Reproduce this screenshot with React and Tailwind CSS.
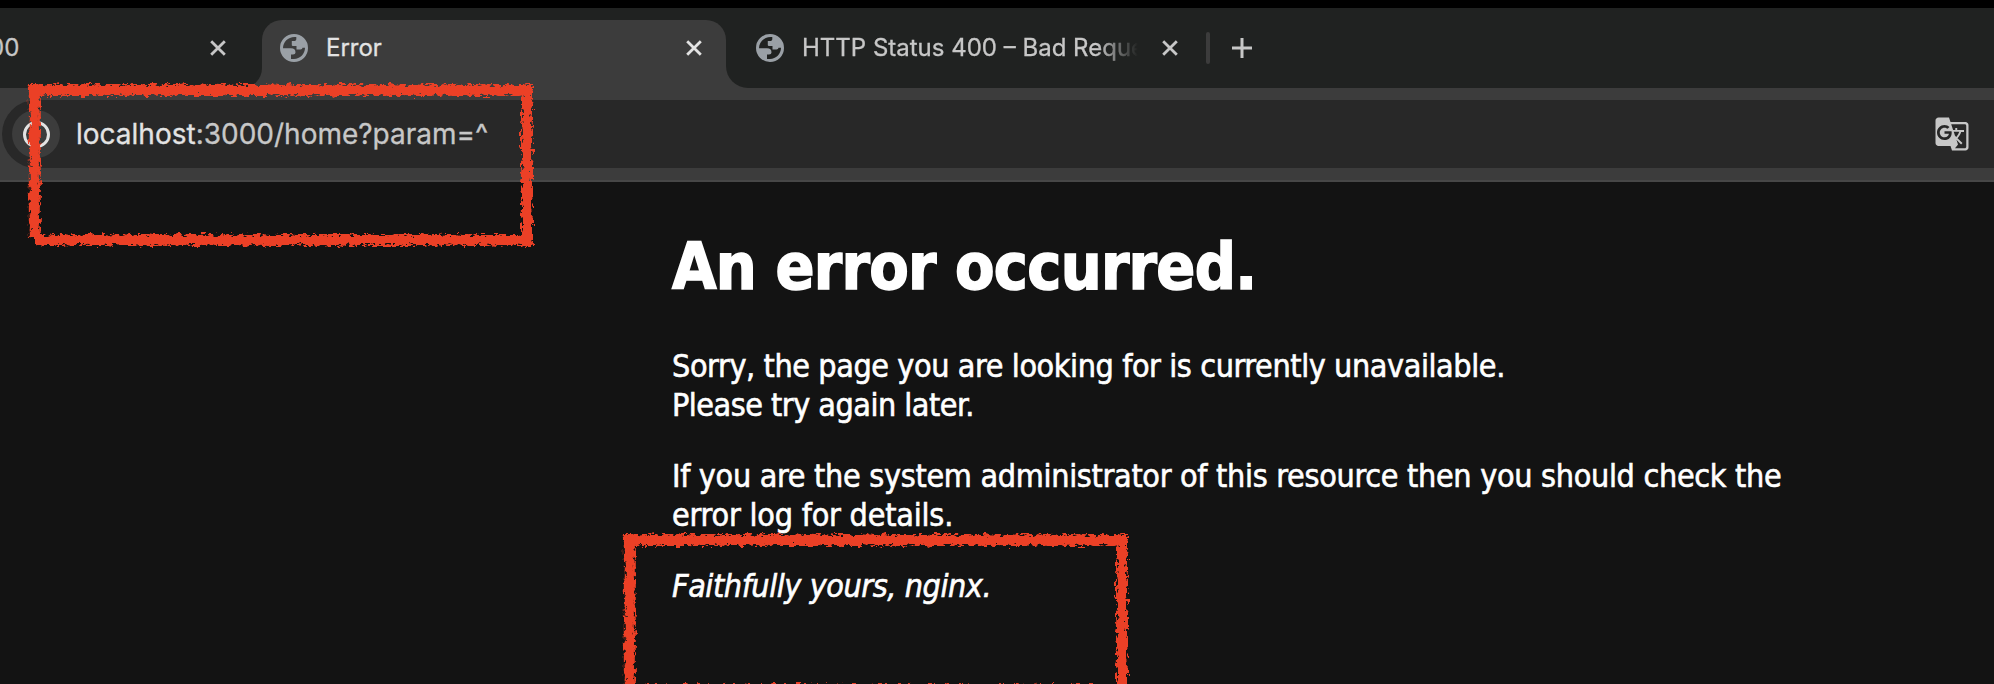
import { MdGTranslate } from "react-icons/md";

function Globe() {
  return (
    <svg viewBox="0 0 28 28" className="size-7 shrink-0">
      <path
        fill="#9aa0a6"
        fillRule="evenodd"
        d="M14 0 A14 14 0 1 1 14 28 A14 14 0 1 1 14 0 Z M3 14.3 C3 8 8 3.2 14.5 3 H16.3 V5 C16.3 6.6 15.4 7 14 7 H11.8 V11.2 Q11.8 12 13 12 H16.5 V15.5 H20.5 Q22.5 15.5 22.5 13.800 H25 C25 20 20 25 14 25 H11 V20.5 H13 Q15.5 20.5 15.5 18.5 Q15.5 14.3 11 14.3 Z"
      />
    </svg>
  );
}

function Close({ color }) {
  return (
    <svg viewBox="0 0 16 16" className="size-4 shrink-0">
      <path d="M1.2 1.2 L14.8 14.8 M14.8 1.2 L1.2 14.8" stroke={color} strokeWidth="2.8" fill="none" />
    </svg>
  );
}

const horizontal = "M10 16 H513 M16 166 H513";
const vertical = "M15.8 11 V164 M508 12 V172";

function Crayon({ className }) {
  return (
    <svg viewBox="0 0 524 182" className={`absolute h-[182px] w-[524px] ${className}`}>
      <defs>
        <filter id="grainH" x="0" y="0" width="524" height="182" filterUnits="userSpaceOnUse" colorInterpolationFilters="sRGB">
          <feTurbulence type="fractalNoise" baseFrequency="0.16 0.35" numOctaves="3" seed="7" result="n" />
          <feDisplacementMap in="SourceGraphic" in2="n" scale="7" xChannelSelector="R" yChannelSelector="G" result="d" />
          <feColorMatrix in="n" type="matrix" values="0 0 0 0 0  0 0 0 0 0  0 0 0 0 0  0 0 12 0 -4.7" result="m" />
          <feComposite in="d" in2="m" operator="in" />
        </filter>
        <filter id="grainV" x="0" y="0" width="524" height="182" filterUnits="userSpaceOnUse" colorInterpolationFilters="sRGB">
          <feTurbulence type="fractalNoise" baseFrequency="0.35 0.16" numOctaves="3" seed="4" result="n" />
          <feDisplacementMap in="SourceGraphic" in2="n" scale="7" xChannelSelector="R" yChannelSelector="G" result="d" />
          <feColorMatrix in="n" type="matrix" values="0 0 0 0 0  0 0 0 0 0  0 0 0 0 0  0 0 12 0 -4.7" result="m" />
          <feComposite in="d" in2="m" operator="in" />
        </filter>
        <filter id="core" x="0" y="0" width="524" height="182" filterUnits="userSpaceOnUse" colorInterpolationFilters="sRGB">
          <feTurbulence type="fractalNoise" baseFrequency="0.25" numOctaves="2" seed="2" result="n" />
          <feDisplacementMap in="SourceGraphic" in2="n" scale="6" xChannelSelector="R" yChannelSelector="G" />
        </filter>
      </defs>
      <g stroke="#eb4026" fill="none">
        <path filter="url(#grainH)" strokeWidth="12" d={horizontal} />
        <path filter="url(#grainV)" strokeWidth="12" d={vertical} />
        <path filter="url(#core)" strokeWidth="8" d={`${horizontal} ${vertical}`} />
      </g>
    </svg>
  );
}

export default function App() {
  return (
    <div className="relative flex h-[684px] w-[1994px] flex-col overflow-hidden bg-[#131313] font-['Inter',sans-serif] [-webkit-text-stroke:0.3px]">
      <div className="h-2 bg-black" />
      <div className="flex h-20 items-end bg-[#202221] text-[24px] text-[#c7c7c7]">
        <div className="flex h-20 w-[262px] items-end bg-[#3c3c3c]">
          <div className="flex h-20 w-full items-center justify-between rounded-br-[20px] bg-[#202221] pr-9">
            <span className="-ml-[11px]">00</span>
            <Close color="#c7c7c7" />
          </div>
        </div>
        <div className="flex h-20 w-[464px] items-end bg-[#202221]">
          <div className="flex h-[68px] w-full items-center rounded-t-[20px] bg-[#3c3c3c] pb-3 pl-[18px] pr-6 text-[#e3e3e3]">
            <Globe />
            <span className="ml-[18px] flex-1">Error</span>
            <Close color="#e3e3e3" />
          </div>
        </div>
        <div className="flex h-20 flex-1 bg-[#3c3c3c]">
          <div className="flex h-20 flex-1 items-center rounded-bl-[22px] bg-[#202221] pl-[30px]">
            <Globe />
            <span className="ml-[18px] w-[336px] overflow-hidden whitespace-nowrap [mask-image:linear-gradient(to_right,black_295px,transparent_336px)]">
              HTTP Status 400 – Bad Request
            </span>
            <span className="ml-[24px] flex"><Close color="#c7c7c7" /></span>
            <span className="ml-7 h-8 w-1 rounded-sm bg-[#3c3c3c]" />
            <svg viewBox="0 0 20 20" className="ml-[22px] size-5">
              <path d="M10 0 V20 M0 10 H20" stroke="#c7c7c7" strokeWidth="3" />
            </svg>
          </div>
        </div>
      </div>
      <div className="flex h-[94px] items-center border-b-2 border-[#474747] bg-[#3c3c3c] pl-[2px]">
        <div className="flex h-[68px] flex-1 items-center rounded-l-full bg-[#282828] pl-[10px] pr-6">
          <span className="flex size-12 items-center justify-center rounded-full bg-[#3c3c3c]">
            <span className="size-[27px] rounded-full border-[3px] border-[#e3e3e3]" />
          </span>
          <span className="ml-4 flex-1 whitespace-nowrap text-[28px] text-[#c7c7c7]">
            <span className="text-[#e3e3e3]">localhost</span>:3000/home?param=^
          </span>
          <MdGTranslate className="size-9 text-[#c7c7c7]" />
        </div>
      </div>
      <main className="ml-[672px] w-[1180px] pt-[47px] font-['DejaVu_Sans_Condensed','DejaVu_Sans',sans-serif] text-[32px] leading-[39px] text-white [-webkit-text-stroke:0.6px] [font-stretch:condensed]">
        <h1 className="whitespace-nowrap text-[64px] font-bold leading-[77px] tracking-[-0.72px] [-webkit-text-stroke:1.5px]">An error occurred.</h1>
        <p className="mt-[41px] whitespace-nowrap tracking-[-0.4px]">
          Sorry, the page you are looking for is currently unavailable.<br />
          <span className="tracking-[-0.5px]">Please try again later.</span>
        </p>
        <p className="mt-8 whitespace-nowrap tracking-[-0.3px]">
          If you are the system administrator of this resource then you should check the<br />
          <span className="tracking-[-0.2px]">error log for details.</span>
        </p>
        <p className="mt-8 whitespace-nowrap italic tracking-[-0.42px]">Faithfully yours, nginx.</p>
      </main>
      <Crayon className="left-[19px] top-[74px]" />
      <Crayon className="left-[614px] top-[524px]" />
    </div>
  );
}
